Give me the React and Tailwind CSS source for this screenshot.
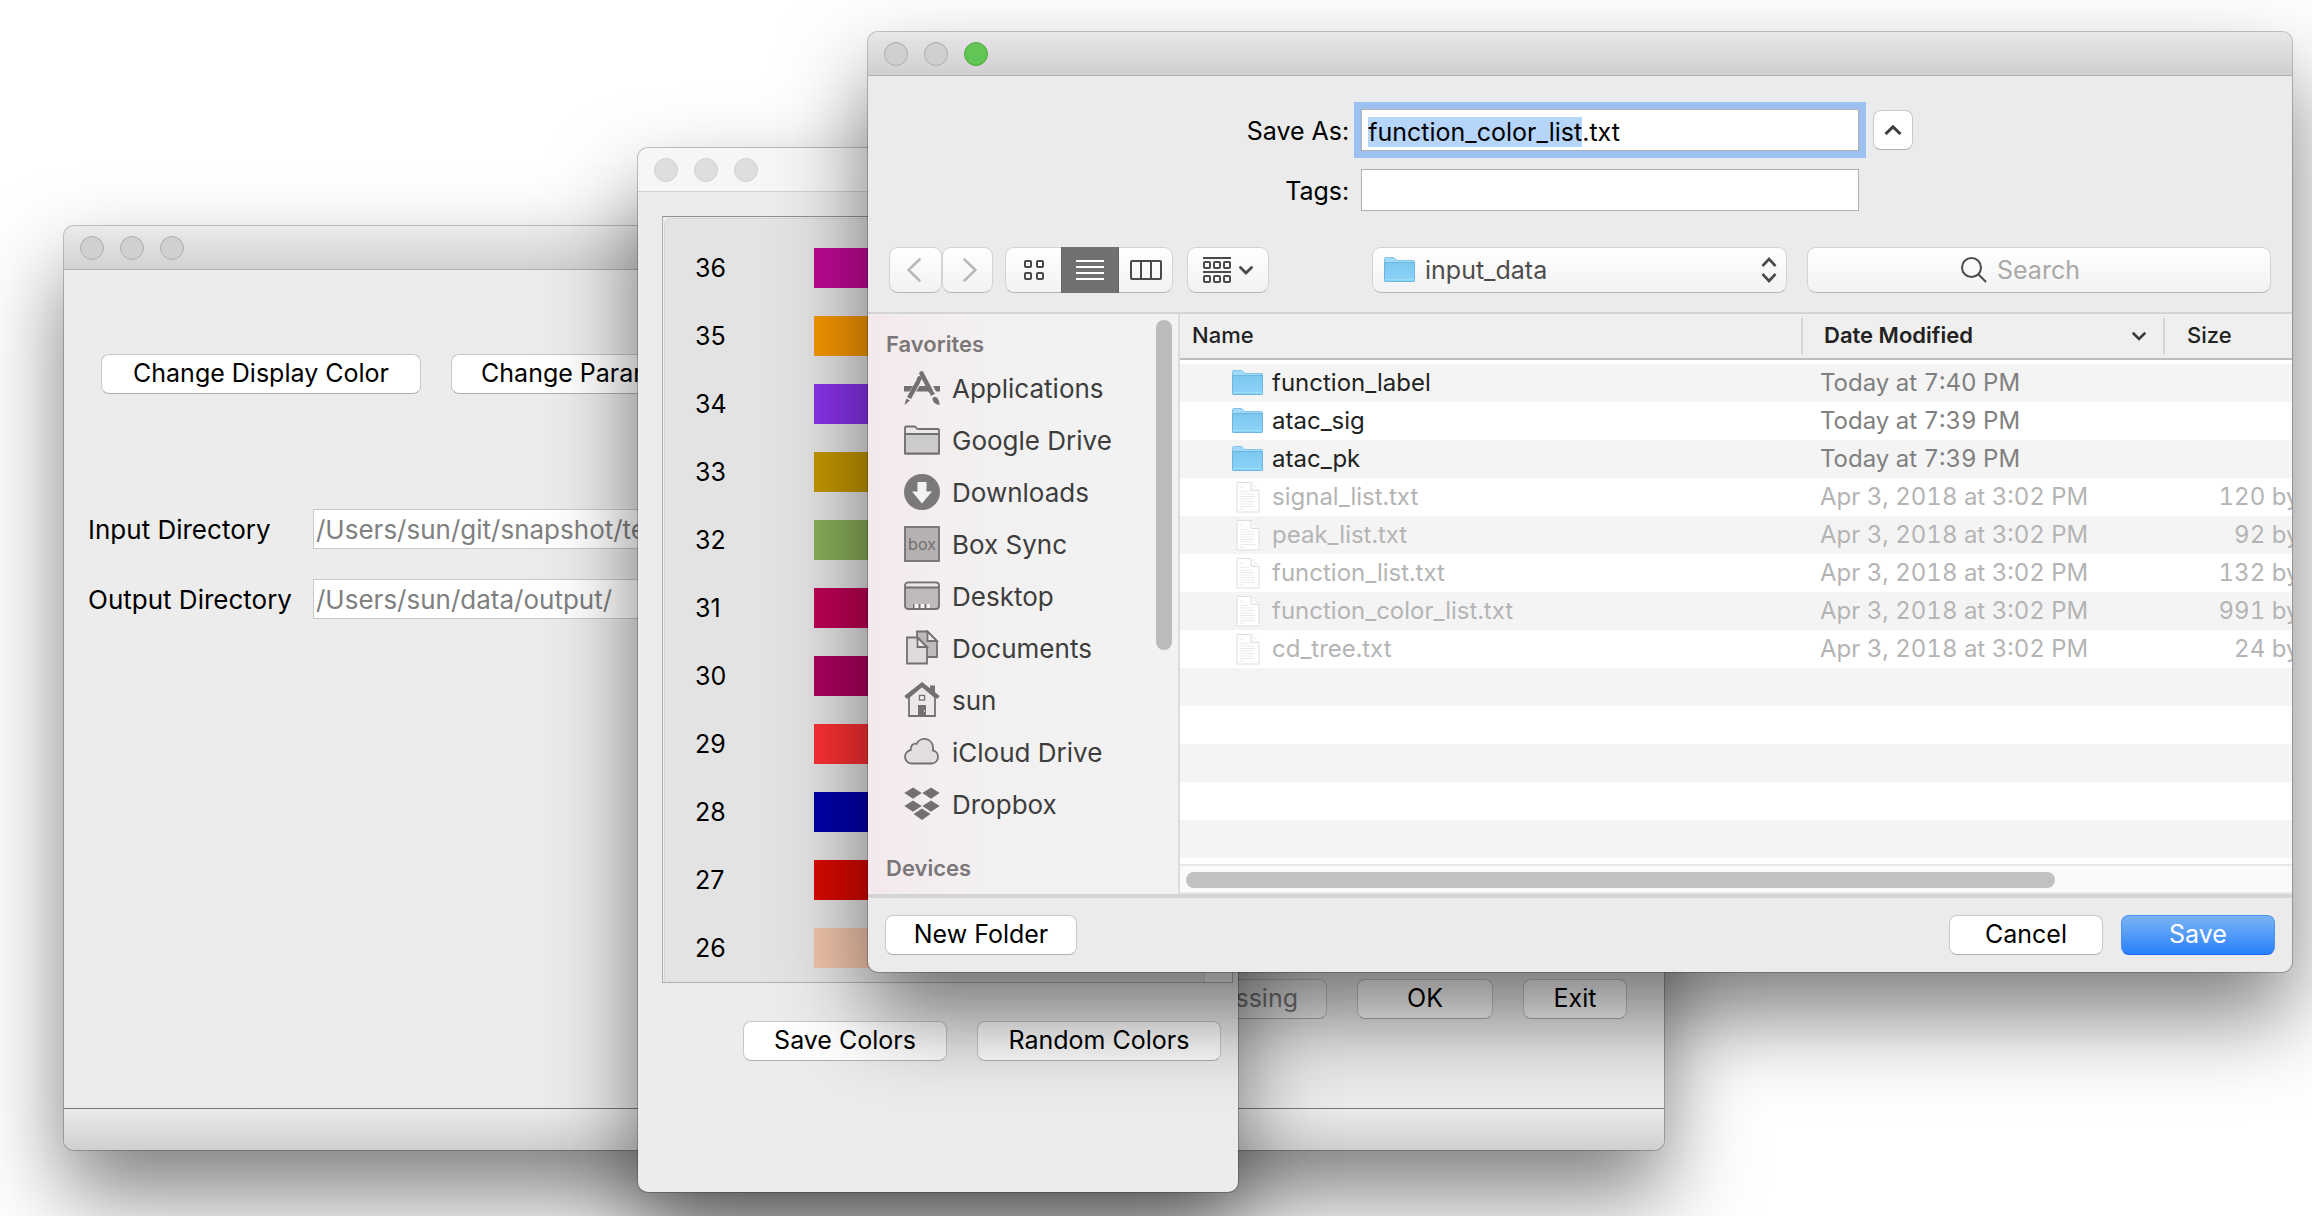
import { useEffect, useRef } from "react";

const GRAY = "#737071";

function TrafficLights({ tone = "border-[#adadad] bg-[#d0d0d0]", zoom }) {
  return (
    <div className="flex gap-4">
      <button aria-label="Close" className={`size-6 rounded-full border ${tone}`} />
      <button aria-label="Minimize" className={`size-6 rounded-full border ${tone}`} />
      <button aria-label="Zoom" className={`size-6 rounded-full border ${zoom || tone}`} />
    </div>
  );
}

function PushButton({ children, className = "", disabled }) {
  return (
    <button
      disabled={disabled}
      className={`h-10 shrink-0 whitespace-nowrap rounded-lg border border-[#c8c8c8] border-b-[#b0b0b0] bg-white text-[25px] text-black disabled:bg-[#f4f4f4] disabled:text-[#808080] ${className}`}
    >
      {children}
    </button>
  );
}

function FolderIcon({ className }) {
  return (
    <svg viewBox="0 0 31 26" className={className} aria-hidden="true">
      <defs>
        <linearGradient id="folderBody" x1="0" y1="0" x2="0" y2="1">
          <stop offset="0" stopColor="#7cc7f1" />
          <stop offset="1" stopColor="#8dd3f8" />
        </linearGradient>
      </defs>
      <path d="M.5 24V2Q.5.5 2 .5h7q1 0 1.600.700L12 2.800q.5.700 1.500.700H29q1.500 0 1.500 1.500v19z" fill="#a2dbf9" stroke="#82c4e8" />
      <path d="M.5 5.500h30V23.500q0 1-1 1h-28q-1 0-1-1z" fill="url(#folderBody)" stroke="#6cb7df" />
      <path d="M1 22.500h29" stroke="#9fdcfa" />
    </svg>
  );
}

function FileIcon() {
  return (
    <svg viewBox="0 0 24 31" className="ml-1 h-[31px] w-6" aria-hidden="true">
      <path d="M1 .5h14l8 8V30H1z" fill="#fff" stroke="#dedede" />
      <path d="M15 .5v8h8" fill="#fafafa" stroke="#dedede" />
      <path d="M4 5h3M4 9.500h9M4 12h14M4 14.500h15M4 17h13M4 19.500h15M4 22h14M4 24.500h15M4 27h5" stroke="#ebebeb" />
    </svg>
  );
}

const icons = {
  apps: (
    <g stroke={GRAY} fill={GRAY}>
      <path d="M0 16h9l-3.500 5.500H0zM15.500 16h8l2.500 5.500H12zM29 16h7v5.500h-4z" stroke="none" />
      <path d="M17.500 3.500l9.500 18" strokeWidth="4.600" strokeLinecap="round" />
      <path d="M14.500 11L5 28" strokeWidth="4.600" />
      <path d="M15.500 8.500l-.6 1" strokeWidth="4.600" strokeLinecap="round" />
      <path d="M2.300 28.500l3.600 2-5.400 4.500z" stroke="none" />
      <path d="M28 23l1 1.800" strokeWidth="4.600" />
      <path d="M28.500 28q3-2.500 5.200.5 1.800 2.500 2 6.500-3.500-.5-5.700-2.500-2-2-1.500-4.500z" stroke="none" />
    </g>
  ),
  folder: (
    <g stroke={GRAY} strokeWidth="1.800" strokeLinejoin="round">
      <path d="M1 31.500V5.500q0-1 1-1h8.500q1 0 1.700 1.200.8 1.300 2 1.300H34q1 0 1 1v23.500z" fill="#e8e6e6" />
      <path d="M1 12h34v19.500H1z" fill="#cccaca" />
    </g>
  ),
  downloads: (
    <g>
      <circle cx="18" cy="18" r="18" fill="#7a7878" />
      <path d="M13.500 8h9v9.500H28L18 29.500 8 17.500h5.500z" fill="#f4f2f2" />
    </g>
  ),
  box: (
    <g>
      <rect x="1" y="1" width="34" height="34" fill="#b5b1b1" stroke={GRAY} strokeWidth="1.800" />
      <text x="18" y="24" textAnchor="middle" fontSize="16" fontFamily="Inter" fill={GRAY}>box</text>
    </g>
  ),
  desktop: (
    <g stroke={GRAY} strokeWidth="1.800">
      <rect x="1" y="4.500" width="34" height="26.500" rx="3" fill="#bfbaba" />
      <path d="M2 9V7.500q0-2 2-2h28q2 0 2 2V9z" fill="#e9e6e6" stroke="none" />
      <path d="M1 9.500h34" />
      <path d="M9 30.500V26h18v4.500z" fill={GRAY} stroke="none" />
      <path d="M10.500 26h4v4h-4zM16.500 26h4v4h-4zM22.500 26h4v4h-4z" fill="#f4f2f2" stroke="none" />
    </g>
  ),
  documents: (
    <g stroke={GRAY} strokeWidth="1.800">
      <path d="M13 1.500h10.500L33 11v16H13z" fill="#bfbaba" />
      <path d="M23.500 1.500V11H33z" fill="#f0eded" />
      <path d="M3 7.500h10.500L23 17v16.500H3z" fill="#dfdadb" />
      <path d="M13.500 7.500V17H23z" fill="#f0eded" />
    </g>
  ),
  home: (
    <g>
      <path d="M5 15L18 4l13 11v19H5z" fill="#ece8e9" stroke={GRAY} strokeWidth="1.800" />
      <path d="M26 3.500h5v10l-5-4z" fill={GRAY} />
      <path d="M1.500 15.500L18 2.500l16.500 13" fill="none" stroke={GRAY} strokeWidth="4" />
      <rect x="15.500" y="13.500" width="5" height="4.500" fill="#fff" stroke={GRAY} strokeWidth="1.400" />
      <path d="M14 34V23h8v11z" fill={GRAY} />
      <path d="M20.500 28v2" stroke="#ddd" />
    </g>
  ),
  cloud: (
    <path d="M7.500 29.500a6.800 6.800 0 0 1-.8-13.500c-.2-4.500 2.500-7 6-6.200a8.600 8.600 0 0 1 16.300 3.200c.1 1.200 0 2.400-.2 3.300a6.700 6.700 0 0 1-.8 13.200z" fill="#e2dddf" stroke={GRAY} strokeWidth="1.800" />
  ),
  dropbox: (
    <path d="M9 1.500l8.700 5.600L9 12.700.3 7.100zM27 1.500l8.700 5.600L27 12.700l-8.700-5.600zM9 14.500l8.700 5.600L9 25.700.3 20.100zM27 14.500l8.700 5.600-8.700 5.600-8.700-5.600zM18 22.500l8.500 5.600-8.500 5.900-8.500-5.900z" fill={GRAY} />
  ),
};

const favorites = [
  ["Applications", "apps"],
  ["Google Drive", "folder"],
  ["Downloads", "downloads"],
  ["Box Sync", "box"],
  ["Desktop", "desktop"],
  ["Documents", "documents"],
  ["sun", "home"],
  ["iCloud Drive", "cloud"],
  ["Dropbox", "dropbox"],
];

const files = [
  ["function_label", "Today at 7:40 PM", "", true],
  ["atac_sig", "Today at 7:39 PM", "", true],
  ["atac_pk", "Today at 7:39 PM", "", true],
  ["signal_list.txt", "Apr 3, 2018 at 3:02 PM", "120 bytes", false],
  ["peak_list.txt", "Apr 3, 2018 at 3:02 PM", "92 bytes", false],
  ["function_list.txt", "Apr 3, 2018 at 3:02 PM", "132 bytes", false],
  ["function_color_list.txt", "Apr 3, 2018 at 3:02 PM", "991 bytes", false],
  ["cd_tree.txt", "Apr 3, 2018 at 3:02 PM", "24 bytes", false],
];

const swatches = [
  [36, "bg-[#bf0894]"],
  [35, "bg-[#f59600]"],
  [34, "bg-[#8832e8]"],
  [33, "bg-[#c29600]"],
  [32, "bg-[#88ad59]"],
  [31, "bg-[#bc0052]"],
  [30, "bg-[#ab005d]"],
  [29, "bg-[#fb3033]"],
  [28, "bg-[#0000ab]"],
  [27, "bg-[#d60900]"],
  [26, "bg-[#f0c3aa]"],
];

const windowShadow =
  "shadow-[0_0_0_1px_rgba(0,0,0,0.22),0_44px_88px_rgba(0,0,0,0.51)]";

const pathInput =
  "h-10 min-w-0 flex-1 border border-[#cacaca] bg-white px-0.5 text-[26px] text-[#808080] outline-none";

function MainWindow() {
  return (
    <section className={`absolute top-[226px] right-[648px] left-16 flex min-h-[924px] flex-col overflow-hidden rounded-[10px] bg-[#ececec] ${windowShadow}`}>
      <header className="flex h-11 items-center border-b border-[#b0b0b0] bg-linear-to-b from-[#ebebeb] to-[#d2d2d2] px-4">
        <TrafficLights />
      </header>
      <div className="flex flex-1 flex-col pt-[84px] pb-[89px]">
        <div className="flex gap-[30px] pl-[37px]">
          <PushButton className="w-80">Change Display Color</PushButton>
          <PushButton className="w-[294px]">Change Parameters</PushButton>
        </div>
        <div className="mt-[115px] flex flex-col gap-[30px] pr-[37px] pl-6">
          <div className="flex items-center">
            <label htmlFor="in-dir" className="w-[225px] shrink-0 text-[26px]">Input Directory</label>
            <input id="in-dir" defaultValue="/Users/sun/git/snapshot/test_data/input_data/" className={pathInput} />
          </div>
          <div className="flex items-center">
            <label htmlFor="out-dir" className="w-[225px] shrink-0 text-[26px]">Output Directory</label>
            <input id="out-dir" defaultValue="/Users/sun/data/output/" className={pathInput} />
          </div>
        </div>
        <div className="mt-auto flex justify-end gap-[30px] pr-[37px]">
          <PushButton disabled className="px-7">Processing</PushButton>
          <PushButton className="w-34">OK</PushButton>
          <PushButton className="w-26">Exit</PushButton>
        </div>
      </div>
      <footer className="h-[42px] border-t border-[#777] bg-linear-to-b from-[#ebebeb] to-[#cfcfcf]" />
    </section>
  );
}

function ColorWindow() {
  return (
    <section className={`absolute top-[148px] left-[638px] flex min-h-[1044px] w-[600px] flex-col overflow-hidden rounded-[10px] bg-[#ececec] ${windowShadow}`}>
      <header className="flex h-11 items-center border-b border-[#d0d0d0] bg-[#f6f6f6] px-4">
        <TrafficLights tone="border-[#d0d0d0] bg-[#dedede]" />
      </header>
      <div className="mt-6 mr-[5px] ml-6 flex border border-[#b0b0b0] border-t-[#8f8f8f]">
        <ul className="mt-px ml-px flex flex-1 flex-col gap-7 rounded-tl-lg border-t border-l border-[#d4d4d4] bg-[#e3e3e3] pt-[29px] pb-[14px]">
          {swatches.map(([n, color]) => (
            <li key={n} className="flex h-10 items-center pl-[30px]">
              <span className="w-[119px] pt-0.5 text-[25px]">{n}</span>
              <span className={`h-10 w-60 ${color}`} />
            </li>
          ))}
        </ul>
        <div className="w-7 border-l border-[#d8d8d8] bg-[#f4f4f4]" />
      </div>
      <div className="mt-[38px] flex justify-end gap-[30px] pr-[17px]">
        <PushButton className="w-51">Save Colors</PushButton>
        <PushButton className="w-61">Random Colors</PushButton>
      </div>
    </section>
  );
}

const toolButton =
  "flex h-[46px] items-center justify-center border border-[#d2d2d2] border-b-[#b5b5b5] bg-linear-to-b from-white to-[#f2f2f2]";

function SaveForm() {
  const nameRef = useRef(null);
  useEffect(() => {
    nameRef.current.focus();
    nameRef.current.setSelectionRange(0, 19);
  }, []);
  return (
    <form className="grid grid-cols-[auto_498px_auto] items-center justify-center gap-y-[18px] pt-[33px] text-[25px]">
      <label htmlFor="save-as" className="pt-1 pr-3 text-right">Save As:</label>
      <input
        ref={nameRef}
        id="save-as"
        defaultValue="function_color_list.txt"
        className="h-[42px] rounded-none border border-[#b0b0b0] bg-white px-1.5 pt-1 leading-[34px] ring-7 ring-[#9cc0f0] outline-none selection:bg-[#b5d5fb]/99 selection:text-black"
      />
      <button type="button" aria-label="Collapse" className="ml-[14px] flex h-10 w-10 items-center justify-center rounded-lg border border-[#c8c8c8] border-b-[#b0b0b0] bg-white">
        <svg viewBox="0 0 18 10" className="h-2.5 w-[18px]" fill="none" stroke="#3f3f3f" strokeWidth="3">
          <path d="M1.500 9L9 1.800 16.500 9" />
        </svg>
      </button>
      <label htmlFor="tags" className="pt-1 pr-3 text-right">Tags:</label>
      <input id="tags" className="h-[42px] border border-[#b0b0b0] bg-white px-1.5 pt-1 outline-none" />
    </form>
  );
}

function Toolbar() {
  return (
    <div className="flex items-center px-[21px] pt-9 pb-[19px]">
      <button aria-label="Back" className={`${toolButton} w-[53px] rounded-[9px] pr-1`}>
        <svg viewBox="0 0 14 24" className="h-6 w-3.5" fill="none" stroke="#b9b9b9" strokeWidth="2.600" strokeLinecap="round"><path d="M12.500 1.500l-11 10.500 11 10.500" /></svg>
      </button>
      <button aria-label="Forward" className={`${toolButton} w-[51px] rounded-[9px] pl-1`}>
        <svg viewBox="0 0 14 24" className="h-6 w-3.5" fill="none" stroke="#b9b9b9" strokeWidth="2.600" strokeLinecap="round"><path d="M1.500 1.500l11 10.500-11 10.500" /></svg>
      </button>
      <div className="ml-3 flex">
        <button aria-label="Icon view" className={`${toolButton} w-14 rounded-l-[9px] border-r-0`}>
          <svg viewBox="0 0 20 20" className="size-5" fill="none" stroke="#4a4a4a" strokeWidth="2">
            <rect x="1" y="1" width="6" height="6" rx="1" /><rect x="13" y="1" width="6" height="6" rx="1" />
            <rect x="1" y="13" width="6" height="6" rx="1" /><rect x="13" y="13" width="6" height="6" rx="1" />
          </svg>
        </button>
        <button aria-label="List view" aria-pressed="true" className="flex h-[46px] w-[58px] items-center justify-center border-x border-[#656565] bg-[#717171]">
          <svg viewBox="0 0 28 20" className="h-5 w-7" stroke="#fff" strokeWidth="2"><path d="M0 1h28M0 7h28M0 13h28M0 19h28" /></svg>
        </button>
        <button aria-label="Column view" className={`${toolButton} w-[54px] rounded-r-[9px] border-l-0`}>
          <svg viewBox="0 0 32 20" className="h-5 w-8" fill="none" stroke="#4a4a4a" strokeWidth="2">
            <rect x="1" y="1" width="30" height="18" rx="1" /><path d="M11 1v18M21 1v18" />
          </svg>
        </button>
      </div>
      <button aria-label="Group items" className={`${toolButton} ml-[14px] w-[82px] gap-2 rounded-[9px]`}>
        <svg viewBox="0 0 28 26" className="h-[26px] w-7" fill="none" stroke="#4a4a4a" strokeWidth="2">
          <path d="M0 1h28M0 15h28" />
          <rect x="1" y="5" width="6" height="6" rx="1" /><rect x="11" y="5" width="6" height="6" rx="1" /><rect x="21" y="5" width="6" height="6" rx="1" />
          <rect x="1" y="19" width="6" height="6" rx="1" /><rect x="11" y="19" width="6" height="6" rx="1" /><rect x="21" y="19" width="6" height="6" rx="1" />
        </svg>
        <svg viewBox="0 0 14 9" className="h-[9px] w-3.5" fill="none" stroke="#4a4a4a" strokeWidth="2.800" strokeLinecap="round"><path d="M1.500 1.500L7 7l5.500-5.500" /></svg>
      </button>
      <div className="relative ml-[103px] w-[415px]">
        <select aria-label="Folder" className="h-[46px] w-full appearance-none rounded-[9px] border border-[#d2d2d2] border-b-[#b5b5b5] bg-linear-to-b from-white to-[#f2f2f2] pt-0.5 pl-13 text-[25px] text-[#4d4d4d] outline-none">
          <option>input_data</option>
        </select>
        <FolderIcon className="pointer-events-none absolute top-2.5 left-3 h-[26px] w-[31px]" />
        <svg viewBox="0 0 16 26" className="pointer-events-none absolute top-2.5 right-2.5 h-[26px] w-4" fill="none" stroke="#4a4a4a" strokeWidth="2.600"><path d="M1.500 9L8 2l6.500 7M1.500 17L8 24l6.500-7" /></svg>
      </div>
      <label className="ml-5 flex h-[46px] min-w-0 flex-1 items-center justify-center gap-2.5 rounded-[9px] border border-[#d2d2d2] border-b-[#b5b5b5] bg-linear-to-b from-white to-[#f2f2f2]">
        <svg viewBox="0 0 26 26" className="size-[26px]" fill="none" stroke="#4a4a4a" strokeWidth="2"><circle cx="10.500" cy="10.500" r="9.500" /><path d="M17 17l8 8" /></svg>
        <input aria-label="Search" placeholder="Search" className="w-30 bg-transparent pt-0.5 text-[25px] outline-none placeholder:text-[#a9a9a9]" />
      </label>
    </div>
  );
}

function Sidebar() {
  return (
    <nav className="relative w-[312px] shrink-0 overflow-hidden border-r-2 border-[#dcdcdc] bg-[#f2f2f2] bg-[linear-gradient(90deg,#f4e9ec_0%,#f3eff0_28%,#f2f2f2_60%)] pt-3">
      <h2 className="flex h-9 items-center pl-[18px] text-[22px] font-semibold text-[#7b7778]">Favorites</h2>
      <ul>
        {favorites.map(([name, icon]) => (
          <li key={name}>
            <a href="#" className="flex h-13 items-center gap-3 pl-9 text-[26px] text-[#3d3d3d]">
              <svg viewBox="0 0 36 36" className="size-9" aria-hidden="true" fill="none">{icons[icon]}</svg>
              {name}
            </a>
          </li>
        ))}
      </ul>
      <h2 className="mt-5 flex h-9 items-center pl-[18px] text-[22px] font-semibold text-[#7b7778]">Devices</h2>
      <div className="absolute top-1.5 right-1.5 h-[330px] w-4 rounded-full bg-[#bbb]" />
    </nav>
  );
}

function FileList() {
  return (
    <div className="flex min-w-0 flex-1 flex-col overflow-hidden bg-white">
      <table className="w-[calc(100%+64px)] table-fixed border-collapse text-left text-2xl">
        <colgroup>
          <col />
          <col className="w-[362px]" />
          <col className="w-[193px]" />
        </colgroup>
        <thead className="text-[22px] text-[#222]">
          <tr>
            <th className="p-0 pb-1 font-medium">
              <div className="flex h-[46px] items-center border-b-2 border-[#bdbdbd] bg-[#efefef] pl-3">Name</div>
            </th>
            <th className="p-0 pb-1 font-semibold" aria-sort="descending">
              <div className="flex h-[46px] items-center border-b-2 border-[#bdbdbd] bg-[#efefef]">
                <div className="flex h-9 flex-1 items-center justify-between border-l-2 border-[#d6d6d6] pr-[17px] pl-[21px]">
                  Date Modified
                  <svg viewBox="0 0 14 9" className="h-[9px] w-3.5" fill="none" stroke="#3a3a3a" strokeWidth="2.600" strokeLinecap="round"><path d="M1.500 1.500L7 7l5.500-5.500" /></svg>
                </div>
              </div>
            </th>
            <th className="p-0 pb-1 font-medium">
              <div className="flex h-[46px] items-center border-b-2 border-[#bdbdbd] bg-[#efefef]">
                <div className="flex h-9 flex-1 items-center border-l-2 border-[#d6d6d6] pl-[22px]">Size</div>
              </div>
            </th>
          </tr>
        </thead>
        <tbody className="tabular-nums">
          {files.map(([name, date, size, folder]) => (
            <tr key={name} className="h-[38px] odd:bg-[#f4f4f4]">
              <td className={`p-0 ${folder ? "text-[#222]" : "text-[#b4b4b4]"}`}>
                <div className="flex items-center pl-[52px]">
                  <span className="w-10 shrink-0">{folder ? <FolderIcon className="h-[26px] w-[31px]" /> : <FileIcon />}</span>
                  {name}
                </div>
              </td>
              <td className={`p-0 pl-[19px] whitespace-nowrap ${folder ? "text-[#808080]" : "text-[#b4b4b4]"}`}>{date}</td>
              <td className="p-0 pr-[22px] text-right whitespace-nowrap text-[#b4b4b4]">{size}</td>
            </tr>
          ))}
          {[0, 1, 2, 3, 4].map((i) => (
            <tr key={i} className="h-[38px] odd:bg-[#f4f4f4]">
              <td colSpan={3} className="p-0" />
            </tr>
          ))}
        </tbody>
      </table>
      <div className="mt-1.5 h-[30px] border-y-2 border-[#e7e7e7] bg-[#fafafa] px-1.5 pt-1.5">
        <div className="h-4 w-[79%] rounded-full bg-[#c1c1c1]" />
      </div>
    </div>
  );
}

function SaveDialog() {
  return (
    <section role="dialog" aria-label="Save" className={`absolute top-8 right-5 left-[868px] overflow-hidden rounded-[10px] bg-[#ebebeb] ${windowShadow}`}>
      <header className="flex h-11 items-center border-b border-[#b0b0b0] bg-linear-to-b from-[#e9e7e9] to-[#d0ced0] px-4">
        <TrafficLights zoom="border-[#51a93f] bg-[#62c655]" />
      </header>
      <SaveForm />
      <Toolbar />
      <div className="flex border-t-2 border-b-4 border-[#d4d4d4]">
        <Sidebar />
        <FileList />
      </div>
      <footer className="flex items-center p-[17px]">
        <PushButton className="w-48">New Folder</PushButton>
        <PushButton className="ml-auto w-[154px]">Cancel</PushButton>
        <button className="ml-[18px] h-10 w-[154px] rounded-lg border border-[#4a93f0] border-b-[#1a66f0] bg-linear-to-b from-[#7ab3f5] to-[#2480fa] text-[25px] text-white">Save</button>
      </footer>
    </section>
  );
}

export default function App() {
  return (
    <main className="relative min-h-screen overflow-hidden bg-white font-[Inter,sans-serif] text-black">
      <MainWindow />
      <ColorWindow />
      <SaveDialog />
    </main>
  );
}
